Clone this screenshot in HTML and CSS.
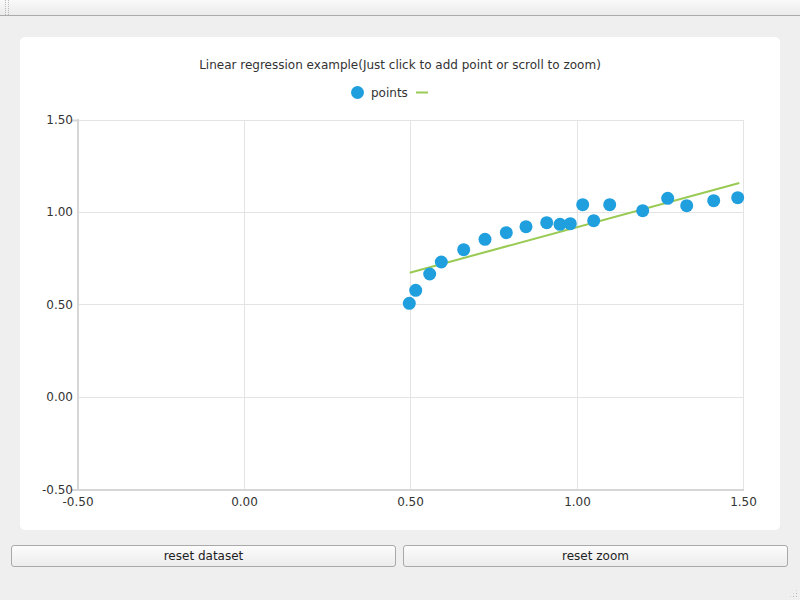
FILE: index.html
```html
<!DOCTYPE html>
<html lang="en">
  <head>
    <meta charset="UTF-8" />
    <title>Linear regression example</title>
    <link rel="stylesheet" href="styles.css">
  </head>
  <body>
    <div class="toolbar">
      <div class="grip"></div>
    </div>
    <div class="main">
      <div class="chart-card">
        <svg class="chart" width="760" height="493" viewBox="20 37 760 493">
          <text class="title" x="400" y="69" text-anchor="middle">Linear regression example(Just click to add point or scroll to zoom)</text>

          <!-- legend -->
          <circle cx="357.5" cy="92.5" r="6.5" fill="#209fdf" />
          <text class="legend" x="371" y="97">points</text>
          <line x1="416" y1="92.5" x2="428" y2="92.5" stroke="#99ca53" stroke-width="2" />

          <!-- grid -->
          <g class="grid">
            <line x1="244.5" y1="120" x2="244.5" y2="490" />
            <line x1="410.5" y1="120" x2="410.5" y2="490" />
            <line x1="577.5" y1="120" x2="577.5" y2="490" />
            <line x1="743.5" y1="120" x2="743.5" y2="490" />
            <line x1="78" y1="120.5" x2="744" y2="120.5" />
            <line x1="78" y1="212.5" x2="744" y2="212.5" />
            <line x1="78" y1="304.5" x2="744" y2="304.5" />
            <line x1="78" y1="397.5" x2="744" y2="397.5" />
          </g>
          <g class="axis">
            <line x1="78" y1="119" x2="78" y2="491" />
            <line x1="72" y1="490" x2="744" y2="490" />
            <line x1="72" y1="120.5" x2="78" y2="120.5" />
          </g>

          <g class="ylabels" text-anchor="end">
            <text x="73" y="124">1.50</text>
            <text x="73" y="216">1.00</text>
            <text x="73" y="309">0.50</text>
            <text x="73" y="401">0.00</text>
            <text x="73" y="494">-0.50</text>
          </g>
          <g class="xlabels" text-anchor="middle">
            <text x="78" y="506">-0.50</text>
            <text x="244.5" y="506">0.00</text>
            <text x="410.5" y="506">0.50</text>
            <text x="577.5" y="506">1.00</text>
            <text x="743.5" y="506">1.50</text>
          </g>

          <!-- regression line -->
          <line x1="409.7" y1="272.7" x2="739.3" y2="183" stroke="#99ca53" stroke-width="2" />

          <g class="points" fill="#209fdf">
            <circle cx="409.3" cy="303.3" r="6.5" />
            <circle cx="415.7" cy="290.3" r="6.5" />
            <circle cx="429.7" cy="274" r="6.5" />
            <circle cx="441.3" cy="262" r="6.5" />
            <circle cx="463.7" cy="249.7" r="6.5" />
            <circle cx="485" cy="239.3" r="6.5" />
            <circle cx="506.3" cy="232.7" r="6.5" />
            <circle cx="526" cy="226.7" r="6.5" />
            <circle cx="546.7" cy="222.7" r="6.5" />
            <circle cx="560" cy="224.3" r="6.5" />
            <circle cx="570.3" cy="223.7" r="6.5" />
            <circle cx="582.7" cy="204.7" r="6.5" />
            <circle cx="593.7" cy="220.7" r="6.5" />
            <circle cx="609.7" cy="204.7" r="6.5" />
            <circle cx="642.7" cy="210.7" r="6.5" />
            <circle cx="667.7" cy="198.3" r="6.5" />
            <circle cx="686.7" cy="205.7" r="6.5" />
            <circle cx="713.7" cy="200.7" r="6.5" />
            <circle cx="737.7" cy="197.7" r="6.5" />
          </g>
        </svg>
      </div>
      <div class="buttons">
        <button class="btn">reset dataset</button>
        <button class="btn">reset zoom</button>
      </div>
    </div>
    <div class="size-grip"></div>
  </body>
</html>
```

FILE: styles.css
```css
* {
  margin: 0;
  padding: 0;
  box-sizing: border-box;
  font-family: "DejaVu Sans", Verdana, sans-serif;
}

body {
  background-color: #efefef;
  width: 800px;
  height: 600px;
  overflow: hidden;
  position: relative;
}

.toolbar {
  height: 16px;
  background: linear-gradient(#f9f9f9, #ebebeb);
  border-bottom: 1px solid #ababab;
  padding-left: 5px;
}

.grip {
  width: 4px;
  height: 15px;
  border-left: 1px dotted #b8b8b8;
  border-right: 1px dotted #b8b8b8;
}

.main {
  padding: 21px 12px 0 11px;
}

.chart-card {
  margin: 0 8px 0 9px;
  height: 493px;
  background-color: #ffffff;
  border-radius: 5px;
}

.chart {
  display: block;
}

.chart text {
  font-family: "DejaVu Sans", Verdana, sans-serif;
  font-size: 12px;
  fill: #333333;
}

.grid line {
  stroke: #e4e4e4;
  stroke-width: 1;
}

.axis line {
  stroke: #d6d6d6;
  stroke-width: 2;
}

.buttons {
  display: flex;
  gap: 7px;
  margin-top: 15px;
}

.btn {
  flex: 1;
  height: 22px;
  background: linear-gradient(#fcfcfc, #ececec);
  border: 1px solid #a9a9a9;
  border-radius: 3px;
  font-size: 12px;
  color: #1e1e1e;
}

.size-grip {
  position: absolute;
  right: 2px;
  bottom: 2px;
  width: 9px;
  height: 9px;
  background-image: radial-gradient(circle, #b8b8b8 0.6px, transparent 0.8px);
  background-size: 3px 3px;
  clip-path: polygon(100% 0, 100% 100%, 0 100%);
}
```
